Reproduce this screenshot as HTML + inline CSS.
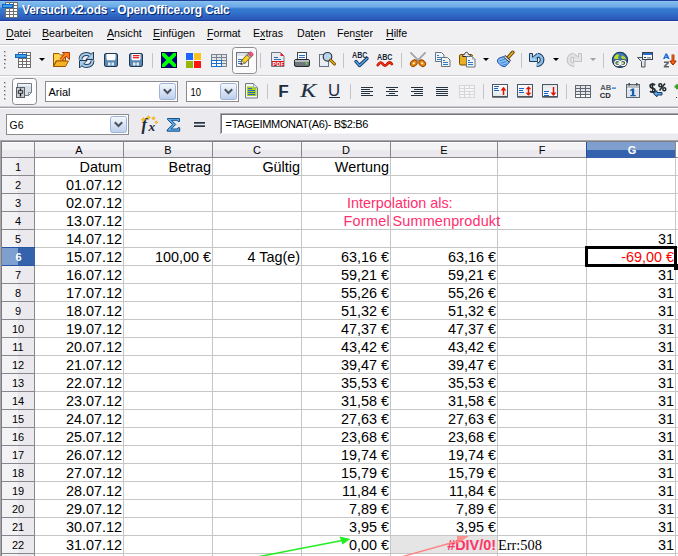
<!DOCTYPE html>
<html><head><meta charset="utf-8">
<style>
*{margin:0;padding:0;box-sizing:border-box}
html,body{width:678px;height:556px;overflow:hidden;background:#fff;font-family:"Liberation Sans",sans-serif}
.a{position:absolute}
#title{left:0;top:0;width:678px;height:22px;background:linear-gradient(#1E3C9C 0,#1E3C9C 1px,#96CAF4 1px,#7EBBEC 2px,#6CA9E6 7px,#4A8ADA 8px,#3479CF 9px,#3376CD 12px,#3068C4 15px,#2C56B6 20px,#1E3D9E 20px,#1E3D9E 21px,#F8F8FA 21px)}
#title .t{left:22px;top:3px;letter-spacing:-0.2px;font:bold 12px "Liberation Sans",sans-serif;color:#fff;text-shadow:1px 1px 0 #0A246A;white-space:pre}
#menu{left:0;top:22px;width:678px;height:22px;background:#F0EFF2}
#menu span{position:absolute;top:5px;font-size:10.6px;color:#000;white-space:pre;line-height:12px}
#menu u{text-decoration:none;border-bottom:1px solid #000}
.line{position:absolute;left:0;width:678px;height:1px}
#tb1{left:0;top:46px;width:678px;height:29px;background:#F1F1F3}
#tb2{left:0;top:77px;width:678px;height:29px;background:#F1F1F3}
#fbar{left:0;top:109px;width:678px;height:31px;background:#EBEAEE}
.grip{position:absolute;width:2px;height:2px;background:linear-gradient(135deg,#6A6A6E 50%,#C8C8CC 50%)}
.sep{position:absolute;width:1px;height:15px;background:#C4C4C8}
.ddarr{position:absolute;width:0;height:0;border-left:3px solid transparent;border-right:3px solid transparent;border-top:3px solid #000}
#grid{left:0;top:141px;width:678px;height:415px;background:#fff;overflow:hidden}
.vl{position:absolute;top:17px;width:1px;height:400px;background:#C6C6C6}
.hl{position:absolute;left:35px;width:643px;height:1px;background:#C6C6C6}
.rh{position:absolute;left:2px;width:32px;height:17px;background:linear-gradient(90deg,#F3F2F5 0,#F3F2F5 16px,#EBE9ED 16px);font:11px "Liberation Sans",sans-serif;color:#000;text-align:center;line-height:19px}
.rhs{position:absolute;left:2px;width:33px;height:19px;border-top:1px solid #2A55A5;border-bottom:1px solid #2A55A5;background:linear-gradient(90deg,#7F9FCF 0,#7F9FCF 16px,#3462AD 16px);font:bold 11px "Liberation Sans",sans-serif;color:#fff;text-align:center;line-height:19px}
.ch{position:absolute;top:1px;height:15px;background:linear-gradient(#FFFFFF 0,#FFFFFF 1px,#F3F2F5 1px,#F3F2F5 8px,#EBE9ED 8px);font:11px "Liberation Sans",sans-serif;color:#000;text-align:center;line-height:17px}
.chs{position:absolute;top:1px;height:16px;padding-left:2px;background:linear-gradient(#7F9FCF 0,#7F9FCF 8px,#3462AD 8px);font:bold 11px "Liberation Sans",sans-serif;color:#fff;text-align:center;line-height:17px}
.c{position:absolute;font-size:14.4px;color:#000;white-space:pre;line-height:18.5px}

</style></head><body>
<div id="title" class="a"><div class="t a">Versuch x2.ods - OpenOffice.org Calc</div><svg class="a" style="left:0;top:0" width="24" height="21" shape-rendering="crispEdges">
<rect x="5" y="2" width="13" height="16" fill="#6E6E6E"/>
<g fill="#fff">
<rect x="6" y="3" width="3" height="2"/><rect x="10" y="3" width="3" height="2"/><rect x="14" y="3" width="3" height="2"/>
<rect x="6" y="6" width="3" height="2"/><rect x="10" y="6" width="3" height="2"/><rect x="14" y="6" width="3" height="2"/>
<rect x="6" y="9" width="3" height="2"/><rect x="10" y="9" width="3" height="2"/><rect x="14" y="9" width="3" height="2"/>
<rect x="6" y="12" width="3" height="2"/><rect x="10" y="12" width="3" height="2"/><rect x="14" y="12" width="3" height="2"/>
<rect x="6" y="15" width="3" height="2"/><rect x="10" y="15" width="3" height="2"/><rect x="14" y="15" width="3" height="2"/>
</g>
<rect x="2" y="4" width="11" height="4" fill="#0B63C4"/>
<rect x="3" y="5" width="9" height="2" fill="#42A0E6"/>
</svg>
</div>
<div id="menu" class="a"><span style="left:6px"><u>D</u>atei</span><span style="left:42px"><u>B</u>earbeiten</span><span style="left:107px"><u>A</u>nsicht</span><span style="left:153px"><u>E</u>infügen</span><span style="left:207px"><u>F</u>ormat</span><span style="left:253px">E<u>x</u>tras</span><span style="left:297px">Da<u>t</u>en</span><span style="left:337px">Fen<u>s</u>ter</span><span style="left:386px"><u>H</u>ilfe</span></div>
<div class="line" style="top:44px;background:#CBCACE"></div>
<div class="line" style="top:45px;background:#FFFFFF"></div>
<div id="tb1" class="a"></div>
<div class="line" style="top:75px;background:#CBCACE"></div>
<div class="line" style="top:76px;background:#FFFFFF"></div>
<div id="tb2" class="a"></div>
<div class="line" style="top:106px;background:#CFCFD3"></div>
<div class="line" style="top:107px;background:#A2A2A6"></div>
<div class="line" style="top:108px;background:#FFFFFF"></div>
<div class="line" style="top:140px;background:#A6A6AA"></div>
<div id="fbar" class="a"></div>
<div class="grip" style="left:4px;top:51px"></div>
<div class="grip" style="left:4px;top:55px"></div>
<div class="grip" style="left:4px;top:59px"></div>
<div class="grip" style="left:4px;top:63px"></div>
<div class="grip" style="left:4px;top:67px"></div>
<div class="grip" style="left:4px;top:82px"></div>
<div class="grip" style="left:4px;top:86px"></div>
<div class="grip" style="left:4px;top:90px"></div>
<div class="grip" style="left:4px;top:94px"></div>
<div class="grip" style="left:4px;top:98px"></div>
<div class="sep" style="left:152px;top:53px"></div>
<div class="sep" style="left:260px;top:53px"></div>
<div class="sep" style="left:343px;top:53px"></div>
<div class="sep" style="left:401px;top:53px"></div>
<div class="sep" style="left:521px;top:53px"></div>
<div class="sep" style="left:603px;top:53px"></div>
<div class="sep" style="left:267px;top:84px"></div>
<div class="sep" style="left:350px;top:84px"></div>
<div class="sep" style="left:483px;top:84px"></div>
<div class="sep" style="left:566px;top:84px"></div>
<div class="ddarr" style="left:39px;top:58px;border-top-color:#000"></div>
<div class="ddarr" style="left:483px;top:58px;border-top-color:#000"></div>
<div class="ddarr" style="left:553px;top:58px;border-top-color:#000"></div>
<div class="ddarr" style="left:590px;top:58px;border-top-color:#A0A0A0"></div>
<svg class="a" style="left:0;top:0" width="678" height="141" viewBox="0 0 678 141" font-family="Liberation Sans">
<!-- ===== toolbar1 ===== -->
<!-- new (table) -->
<g shape-rendering="crispEdges">
<rect x="18" y="52" width="13" height="16" fill="#6E6E6E"/>
<g fill="#fff">
<rect x="19" y="53" width="3" height="2"/><rect x="23" y="53" width="3" height="2"/><rect x="27" y="53" width="3" height="2"/>
<rect x="19" y="56" width="3" height="2"/><rect x="23" y="56" width="3" height="2"/><rect x="27" y="56" width="3" height="2"/>
<rect x="19" y="59" width="3" height="2"/><rect x="23" y="59" width="3" height="2"/><rect x="27" y="59" width="3" height="2"/>
<rect x="19" y="62" width="3" height="2"/><rect x="23" y="62" width="3" height="2"/><rect x="27" y="62" width="3" height="2"/>
<rect x="19" y="65" width="3" height="2"/><rect x="23" y="65" width="3" height="2"/><rect x="27" y="65" width="3" height="2"/>
</g>
<rect x="15" y="54" width="12" height="4" fill="#0B63C4"/>
<rect x="16" y="55" width="10" height="2" fill="#42A0E6"/>
</g>
<!-- open folder -->
<path d="M53.5 53.5H59L60.5 55H65.5V61L56 61L53.5 66.5Z" fill="#FFD44C" stroke="#9A5400" stroke-linejoin="round"/>
<path d="M56.5 61H68.5L65.5 66.5H53.5Z" fill="#F4B422" stroke="#9A5400" stroke-linejoin="round"/>
<path d="M60.8 59.8L66.2 54.4" stroke="#B23C00" stroke-width="3.6"/>
<path d="M62.3 52.5H69.5V59.7Z" fill="#FF7A1C" stroke="#B23C00" stroke-linejoin="round"/>
<path d="M60.8 59.8L66.2 54.4" stroke="#FF8A2A" stroke-width="1.8"/>
<!-- reload -->
<g fill="none" stroke-linecap="butt">
<path d="M80.5 59.5C80.5 55.8 83.2 54 86.5 54C88.3 54 89.6 54.7 90.6 55.6" stroke="#1E3C5A" stroke-width="4"/>
<path d="M92.5 60.5C92.5 64.2 89.8 66 86.5 66C84.7 66 83.4 65.3 82.4 64.4" stroke="#1E3C5A" stroke-width="4"/>
</g>
<path d="M93.5 52v7.5h-7.5z" fill="#9CC4E8" stroke="#1E3C5A" stroke-linejoin="round"/>
<path d="M79.5 68v-7.5h7.5z" fill="#9CC4E8" stroke="#1E3C5A" stroke-linejoin="round"/>
<g fill="none">
<path d="M80.5 59.5C80.5 55.8 83.2 54 86.5 54C88.3 54 89.6 54.7 90.6 55.6" stroke="#A8CCEC" stroke-width="2"/>
<path d="M92.5 60.5C92.5 64.2 89.8 66 86.5 66C84.7 66 83.4 65.3 82.4 64.4" stroke="#A8CCEC" stroke-width="2"/>
</g>
<path d="M92.8 53.5v5.3h-5.3z" fill="#A8CCEC"/>
<path d="M80.2 66.5v-5.3h5.3z" fill="#A8CCEC"/>
<!-- save -->
<g>
<rect x="104.5" y="53.5" width="13" height="13" rx="1.5" fill="#5A88B2" stroke="#1C3A58"/>
<path d="M106.5 54h9v5l-.8 1.2h-7.4l-.8-1.2z" fill="#fff"/>
<rect x="108" y="62.5" width="2.5" height="3" fill="#E4EAF0"/><rect x="111.5" y="62.5" width="2.5" height="3" fill="#E4EAF0"/>
</g>
<g>
<rect x="129.5" y="53.5" width="13" height="13" rx="1.5" fill="#5A88B2" stroke="#1C3A58"/>
<path d="M131.5 54h9v5l-.8 1.2h-7.4l-.8-1.2z" fill="#fff"/>
<rect x="133" y="55" width="6.5" height="1.3" fill="#E82020"/><rect x="133" y="57" width="6" height="1.3" fill="#E82020"/>
<rect x="133" y="62.5" width="2.5" height="3" fill="#E4EAF0"/><rect x="136.5" y="62.5" width="2.5" height="3" fill="#E4EAF0"/>
</g>
<!-- green X -->
<rect x="161.5" y="52.5" width="15" height="15" fill="#000080" stroke="#00004A"/>
<clipPath id="xclip"><rect x="162" y="53" width="14" height="14"/></clipPath>
<path d="M162 53l14 14M176 53l-14 14" stroke="#00FF00" stroke-width="3.8" clip-path="url(#xclip)"/>
<!-- 4 squares -->
<g shape-rendering="crispEdges">
<rect x="186" y="53" width="7" height="7" fill="#1A66FF"/>
<rect x="194" y="53" width="7" height="7" fill="#FFC21E"/>
<rect x="186" y="61" width="7" height="7" fill="#98B404"/>
<rect x="194" y="61" width="7" height="7" fill="#FF1414"/>
</g>
<!-- table 2 -->
<g shape-rendering="crispEdges">
<rect x="211" y="54" width="16" height="13" fill="#7A848E"/>
<g fill="#E2E6EA">
<rect x="212" y="55" width="4" height="2"/><rect x="217" y="55" width="4" height="2"/><rect x="222" y="55" width="4" height="2"/>
<rect x="212" y="58" width="4" height="2"/><rect x="217" y="58" width="4" height="2"/><rect x="222" y="58" width="4" height="2"/>
<rect x="222" y="61" width="4" height="2"/><rect x="222" y="64" width="4" height="2"/>
</g>
<rect x="211" y="60" width="11" height="7" fill="#1A6ED0"/>
<g fill="#fff"><rect x="212" y="61" width="4" height="2"/><rect x="217" y="61" width="4" height="2"/><rect x="212" y="64" width="4" height="2"/><rect x="217" y="64" width="4" height="2"/></g>
</g>
<!-- edit button -->
<rect x="232.5" y="47.5" width="24" height="26" rx="3" fill="#FBFBFC" stroke="#8E8E90"/>
<rect x="236.5" y="52.5" width="12" height="14" fill="#DCE2E8" stroke="#6E7680"/>
<rect x="237" y="56" width="11" height="10" fill="#F4F6F8"/>
<g fill="#2A78C8" shape-rendering="crispEdges"><rect x="238" y="59" width="5" height="1"/><rect x="238" y="61" width="4" height="1"/><rect x="238" y="63" width="5" height="1"/></g>
<path d="M241.7 60.1L244.9 63.3L240.8 64.6Z" fill="#F4E8D0" stroke="#5A4A30" stroke-width=".7" stroke-linejoin="round"/>
<path d="M240.6 64.7l.6-1.9 1.3 1.3z" fill="#101010"/>
<path d="M241.7 60.1L247.1 54.7L250.3 57.9L244.9 63.3Z" fill="#F2C81C" stroke="#6A4A10" stroke-width=".8" stroke-linejoin="round"/>
<path d="M243.3 61.7L248.7 56.3" stroke="#FFE870" stroke-width=".8"/>
<path d="M247.1 54.7L248.2 53.6L251.4 56.8L250.3 57.9Z" fill="#D8DCE0" stroke="#404850" stroke-width=".7"/>
<path d="M248.2 53.6L249.6 52.2Q250.6 51.4 251.8 52.4L252.6 53.2Q253.6 54.4 252.8 55.4L251.4 56.8Z" fill="#EE5A7A" stroke="#A02848" stroke-width=".7"/>
<!-- pdf -->
<path d="M271.5 52.5h9l3.5 3.5v10.5h-12.5z" fill="#E8ECF0" stroke="#6E7884"/>
<path d="M280.5 52.5l3.5 3.5h-3.5z" fill="#E81C2C"/>
<g fill="#2A70B8" shape-rendering="crispEdges"><rect x="274" y="57" width="4" height="1"/><rect x="274" y="59" width="7" height="1"/></g>
<rect x="272" y="61" width="12" height="5" fill="#E0101E" shape-rendering="crispEdges"/>
<text x="272.6" y="65.6" font-size="5.2" font-weight="bold" fill="#fff" letter-spacing=".5">PDF</text>
<!-- print -->
<rect x="297.5" y="52.5" width="9" height="8" fill="#FAFAFA" stroke="#404850"/>
<g fill="#2A70C0" shape-rendering="crispEdges"><rect x="299" y="55" width="6" height="1"/><rect x="299" y="57" width="6" height="1"/></g>
<rect x="294.5" y="59.5" width="15" height="7" rx="1.5" fill="#70767C" stroke="#24282C"/>
<rect x="295" y="60" width="14" height="2" fill="#B8BCC0"/>
<rect x="305.5" y="62.5" width="2" height="2" fill="#60E040"/>
<!-- preview -->
<rect x="319.5" y="54.5" width="9" height="12" fill="#E8EEF4" stroke="#6A7480"/>
<circle cx="327.5" cy="56.8" r="4.3" fill="#B8D4EE" stroke="#303840" stroke-width="1.2"/>
<path d="M330.5 60l4 4" stroke="#5A4000" stroke-width="3" stroke-linecap="round"/>
<path d="M330.5 60l4 4" stroke="#E8B010" stroke-width="1.6" stroke-linecap="round"/>
<!-- spell -->
<text x="352" y="58.3" font-size="8.5" font-weight="bold" textLength="15.5" lengthAdjust="spacingAndGlyphs" fill="#182838">ABC</text>
<path d="M356 61.5l3.5 4 7.5-7" fill="none" stroke="#1A3458" stroke-width="3.4" stroke-linejoin="round" stroke-linecap="round"/>
<path d="M356 61.5l3.5 4 7.5-7" fill="none" stroke="#4AA6F0" stroke-width="1.6" stroke-linejoin="round" stroke-linecap="round"/>
<text x="377" y="60" font-size="8.5" font-weight="bold" textLength="15.5" lengthAdjust="spacingAndGlyphs" fill="#182838">ABC</text>
<path d="M377.8 65c2-3 3.5-3 5-1 1.5 2 3 2 4.5 0 1.5-2 3-2 4.5 0" fill="none" stroke="#B81000" stroke-width="2.8" stroke-linecap="round"/><path d="M377.8 65c2-3 3.5-3 5-1 1.5 2 3 2 4.5 0 1.5-2 3-2 4.5 0" fill="none" stroke="#FF3A10" stroke-width="1.2" stroke-linecap="round"/>
<!-- cut -->
<path d="M410.5 52.5l8.5 8.5M425.5 52.5l-8.5 8.5" stroke="#7E8288" stroke-width="1.5"/>
<path d="M411 53l7.5 7.5M425 53l-7.5 7.5" stroke="#D0D4D8" stroke-width=".5"/>
<g transform="rotate(-40 413.8 63.2)"><ellipse cx="413.8" cy="63.2" rx="3.6" ry="2.8" fill="#E88A10" stroke="#A04C00" stroke-width="1.1"/><ellipse cx="413.8" cy="63.2" rx="1.1" ry=".9" fill="#F4F4F6"/></g>
<g transform="rotate(40 422.2 63.2)"><ellipse cx="422.2" cy="63.2" rx="3.6" ry="2.8" fill="#E88A10" stroke="#A04C00" stroke-width="1.1"/><ellipse cx="422.2" cy="63.2" rx="1.1" ry=".9" fill="#F4F4F6"/></g>
<!-- copy -->
<path d="M435.5 52.5h6l2.5 2.5v6.5h-8.5z" fill="#F2F4F6" stroke="#6A7480"/>
<g fill="#2A78C8" shape-rendering="crispEdges"><rect x="437" y="55" width="2" height="1"/><rect x="437" y="57" width="5" height="1"/><rect x="437" y="59" width="5" height="1"/></g>
<path d="M441.5 57.5h6l2.5 2.5v6.5h-8.5z" fill="#F2F4F6" stroke="#6A7480"/>
<g fill="#2A78C8" shape-rendering="crispEdges"><rect x="443" y="60" width="2" height="1"/><rect x="443" y="62" width="5" height="1"/><rect x="443" y="64" width="5" height="1"/></g>
<!-- paste -->
<rect x="459.5" y="54.5" width="13" height="10.5" rx="1.5" fill="#E8B020" stroke="#7A4A00"/>
<path d="M462.5 56.5c0-1.5 1-2 2-2.2.3-1.2 1-2 2-2s1.7.8 2 2c1 .2 2 .7 2 2.2z" fill="#E8EAEC" stroke="#2A3038" stroke-width="1"/>
<path d="M466.5 56.5h6l2.5 2.5v8h-8.5z" fill="#F2F4F6" stroke="#6A7480"/>
<path d="M472.5 56.5v2.5h2.5" fill="#DDE2E6" stroke="#8A949E" stroke-width=".8"/>
<g fill="#2A78C8" shape-rendering="crispEdges"><rect x="468" y="60" width="2" height="1"/><rect x="468" y="62" width="5" height="1"/><rect x="468" y="64" width="5" height="1"/></g>
<!-- brush -->
<path d="M512.8 52.3L508.2 57.4" stroke="#5A3C00" stroke-width="3.6" stroke-linecap="round"/>
<path d="M512.8 52.3L508.2 57.4" stroke="#E2AC1C" stroke-width="1.8" stroke-linecap="round"/>
<path d="M503.3 56.6L509.3 62.3L505 66.8Q501 66.8 497.6 62.2Q497 59.8 498.6 58.4Z" fill="#84C2F2" stroke="#1A48B0" stroke-linejoin="round"/>
<path d="M499.5 60.8L504.8 59.3M500.8 63.2L506.3 61.6M502.5 65.3L507.3 63.8" stroke="#3A78D8" stroke-width=".9"/>
<path d="M504.3 55.9L510 61.4" stroke="#2A323A" stroke-width="2.8"/>
<path d="M504.6 56.5L509.6 61.2" stroke="#F2F4F6" stroke-width="1.1"/>
<!-- undo -->
<g><path d="M537.6 55A4.85 4.85 0 1 1 536.8 64.7" fill="none" stroke="#1A3A5C" stroke-width="4.7"/>
<path d="M533 59.2L538.2 55" stroke="#1A3A5C" stroke-width="4.6"/>
<path d="M529.5 53.5H532.5V58H537.5V61.5H529.5Z" fill="#A8D0F2" stroke="#1A3A5C" stroke-linejoin="round"/>
<path d="M537.6 55A4.85 4.85 0 1 1 536.8 64.7" fill="none" stroke="#8CC0EA" stroke-width="2.6"/>
<path d="M532.5 59L538.3 55" stroke="#8CC0EA" stroke-width="2.6"/>
<rect x="530" y="54" width="2" height="7" fill="#A8D0F2"/><rect x="530" y="58.5" width="7" height="2.5" fill="#A8D0F2"/>
</g>
<g transform="translate(1111,0) scale(-1,1)"><path d="M537.6 55A4.85 4.85 0 1 1 536.8 64.7" fill="none" stroke="#C2C2C4" stroke-width="4.7"/>
<path d="M533 59.2L538.2 55" stroke="#C2C2C4" stroke-width="4.6"/>
<path d="M529.5 53.5H532.5V58H537.5V61.5H529.5Z" fill="#E6E6E8" stroke="#C2C2C4" stroke-linejoin="round"/>
<path d="M537.6 55A4.85 4.85 0 1 1 536.8 64.7" fill="none" stroke="#E2E2E4" stroke-width="2.6"/>
<path d="M532.5 59L538.3 55" stroke="#E2E2E4" stroke-width="2.6"/>
<rect x="530" y="54" width="2" height="7" fill="#E6E6E8"/><rect x="530" y="58.5" width="7" height="2.5" fill="#E6E6E8"/>
</g>
<!-- globe -->
<circle cx="620" cy="59.9" r="7.6" fill="#3676BA" stroke="#1C3450" stroke-width="1.1"/>
<path d="M614 58.5c.2-2.5 1.8-4.2 4-4.5l1 1.5-1 2 1 1.5-2 .5z" fill="#C4DC20"/>
<path d="M621.5 55.2c2 .5 3.8 1.8 4.8 3.8l-2.5.5-1.5-.5-1.2-1.2z" fill="#B4D424"/>
<rect x="614.7" y="60.7" width="5.6" height="4.8" rx="2.4" fill="#6A9A40" stroke="#1C2A38" stroke-width="2.4"/>
<rect x="620.3" y="60.7" width="5.6" height="4.8" rx="2.4" fill="#6A9A40" stroke="#1C2A38" stroke-width="2.4"/>
<rect x="614.7" y="60.7" width="5.6" height="4.8" rx="2.4" fill="none" stroke="#FFFFFF" stroke-width="1.3"/>
<rect x="620.3" y="60.7" width="5.6" height="4.8" rx="2.4" fill="none" stroke="#FFFFFF" stroke-width="1.3"/>
<path d="M617.5 63.1h6" stroke="#FFFFFF" stroke-width="1.3"/>
<!-- filter -->
<path d="M637.5 57.5h10.5l-3 4v5.5h-3.5v-5.5z" fill="#E2E6EA" stroke="#4A525A"/>
<rect x="642.5" y="52.5" width="10" height="7" fill="#F8FAFC" stroke="#3A4450"/>
<rect x="643" y="53" width="9" height="2" fill="#2A6CC8"/>
<rect x="644" y="57" width="2" height="1" fill="#303840"/><rect x="647" y="57.5" width="4" height=".8" fill="#303840"/>
<!-- sort -->
<path d="M663 59l2.5-5.5h1.6l2.5 5.5h-1.9l-.4-1h-2.1l-.4 1zM665.3 56.8h1.3l-.65-1.6z" fill="#1A6CD8" fill-rule="evenodd"/>
<path d="M664 61.5h5v1.5l-3 3h3v1.5h-5.2v-1.5l3-3h-2.8z" fill="#5A626A"/>
<path d="M673 54.5v9.5" stroke="#9A2C00" stroke-width="2.8"/>
<path d="M669.8 61l3.2 4 3.2-4z" fill="#FF5A10" stroke="#9A2C00" stroke-linejoin="round"/>
<path d="M673 55v8" stroke="#FF6A18" stroke-width="1.2"/>
<!-- ===== toolbar2 ===== -->
<rect x="12.5" y="78.5" width="24" height="26" rx="3" fill="#FCFCFD" stroke="#8C8C8E"/>
<path d="M17.5 83.5h14v9l-3 3h-11z" fill="#D6DEE6" stroke="#727C86"/>
<rect x="18" y="84" width="13" height="2" fill="#EEF2F6"/>
<path d="M28.5 95.5v-3h3z" fill="#fff" stroke="#727C86" stroke-width=".8"/>
<rect x="16.5" y="87.5" width="8" height="10" fill="#D0D4D8" stroke="#5A6068"/>
<path d="M18 88v9M19.5 88v9M21.5 88v9M23 88v9" stroke="#B8BCC2" stroke-width=".6"/><path d="M20.5 88.5v8" stroke="#101418" stroke-width="1.3"/><rect x="18.3" y="90.8" width="4.4" height="2.4" fill="#E8EAEC" stroke="#1A1E24" stroke-width=".9"/>
<!-- font name box -->
<rect x="45.5" y="81.5" width="132" height="20" fill="#fff" stroke="#8C8C8E"/>
<text x="48.5" y="95.7" font-size="11" fill="#000">Arial</text>
<rect x="159.5" y="83.5" width="16" height="16" rx="2" fill="url(#btng)" stroke="#9CB2D8"/>
<path d="M163.8 89.3l3.7 3.7 3.7-3.7" fill="none" stroke="#4A505C" stroke-width="2"/>
<!-- size box -->
<rect x="186.5" y="81.5" width="52" height="20" fill="#fff" stroke="#8C8C8E"/>
<text x="190.5" y="95.7" font-size="11" textLength="10.5" lengthAdjust="spacingAndGlyphs" fill="#000">10</text>
<rect x="220.5" y="83.5" width="16" height="16" rx="2" fill="url(#btng)" stroke="#9CB2D8"/>
<path d="M224.8 89.3l3.7 3.7 3.7-3.7" fill="none" stroke="#4A505C" stroke-width="2"/>
<defs><linearGradient id="btng" x1="0" y1="0" x2="0" y2="1"><stop offset="0" stop-color="#F6F9FE"/><stop offset="1" stop-color="#BCCEEC"/></linearGradient></defs>
<!-- styles doc -->
<path d="M245.5 83.5h8l4 4v10.5h-12z" fill="#F0F4F8" stroke="#6E7882"/>
<path d="M253.5 83.5v4h4z" fill="#E0E6EC" stroke="#8E98A2" stroke-width=".8"/>
<path d="M247 86.5h6.5v1.5h3v8h-9.5z" fill="#A8D020"/>
<g fill="#2A64C0" shape-rendering="crispEdges"><rect x="248" y="88" width="4" height="1"/><rect x="248" y="90" width="7" height="1"/><rect x="248" y="92" width="7" height="1"/><rect x="248" y="94" width="7" height="1"/></g>
<!-- F K U -->
<text x="278.3" y="96.6" font-size="17.2" font-weight="bold" fill="#1C2E40">F</text>
<text x="300.3" y="96.6" font-size="18" font-style="italic" font-family="Liberation Serif" textLength="16" lengthAdjust="spacingAndGlyphs" fill="#1C2E40" stroke="#1C2E40" stroke-width=".15">K</text>
<text x="328" y="96.4" font-size="16.8" fill="#1C2E40">U</text>
<rect x="329" y="97" width="11" height="1" fill="#1C2E40"/>
<!-- align -->
<g fill="#26323E" shape-rendering="crispEdges">
<rect x="361" y="87" width="12" height="1"/><rect x="361" y="89" width="9" height="1"/><rect x="361" y="91" width="12" height="1"/><rect x="361" y="93" width="9" height="1"/><rect x="361" y="95" width="12" height="1"/>
<rect x="386" y="87" width="12" height="1"/><rect x="389" y="89" width="6" height="1"/><rect x="386" y="91" width="12" height="1"/><rect x="389" y="93" width="6" height="1"/><rect x="386" y="95" width="12" height="1"/>
<rect x="411" y="87" width="12" height="1"/><rect x="414" y="89" width="9" height="1"/><rect x="411" y="91" width="12" height="1"/><rect x="414" y="93" width="9" height="1"/><rect x="411" y="95" width="12" height="1"/>
<rect x="436" y="87" width="12" height="1"/><rect x="436" y="89" width="12" height="1"/><rect x="436" y="91" width="12" height="1"/><rect x="436" y="93" width="12" height="1"/><rect x="436" y="95" width="12" height="1"/>
</g>
<!-- merge (disabled) -->
<g shape-rendering="crispEdges">
<rect x="459" y="85" width="16" height="13" fill="#D4D6D8"/>
<g fill="#F6F6F8"><rect x="460" y="86" width="4" height="2"/><rect x="465" y="86" width="4" height="2"/><rect x="470" y="86" width="4" height="2"/>
<rect x="460" y="89" width="4" height="2"/><rect x="465" y="89" width="9" height="2"/>
<rect x="460" y="92" width="4" height="2"/><rect x="465" y="92" width="4" height="2"/><rect x="470" y="92" width="4" height="2"/>
<rect x="460" y="95" width="4" height="2"/><rect x="465" y="95" width="4" height="2"/><rect x="470" y="95" width="4" height="2"/></g>
</g>
<!-- valign boxes -->
<defs><linearGradient id="vg" x1="0" y1="0" x2="0" y2="1"><stop offset="0" stop-color="#FFFFFF"/><stop offset="1" stop-color="#E2E6EA"/></linearGradient>
<linearGradient id="vg2" x1="0" y1="0" x2="0" y2="1"><stop offset="0" stop-color="#E2E6EA"/><stop offset="1" stop-color="#FFFFFF"/></linearGradient></defs>
<rect x="492.5" y="84.5" width="15" height="12.5" fill="url(#vg)" stroke="#4C5660"/>
<rect x="493" y="96" width="14" height="1.5" fill="#4C5660"/>
<g fill="#1A64C8" shape-rendering="crispEdges"><rect x="494" y="86" width="5" height="1"/><rect x="494" y="88" width="4" height="1"/><rect x="494" y="90" width="5" height="1"/></g>
<path d="M503.5 95v-7.5" stroke="#E01400" stroke-width="1.5"/><path d="M500.5 90.5l3-3.5 3 3.5z" fill="#E01400"/>
<rect x="517.5" y="84.5" width="15" height="12.5" fill="url(#vg)" stroke="#4C5660"/>
<rect x="518" y="96" width="14" height="1.5" fill="#4C5660"/>
<g fill="#1A64C8" shape-rendering="crispEdges"><rect x="519" y="88" width="5" height="1"/><rect x="519" y="90" width="4" height="1"/><rect x="519" y="92" width="5" height="1"/></g>
<path d="M528.5 87v8" stroke="#E01400" stroke-width="1.5"/><path d="M525.7 89.2l2.8-3 2.8 3zM525.7 92.8l2.8 3 2.8-3z" fill="#E01400"/>
<rect x="542.5" y="84.5" width="15" height="12.5" fill="url(#vg2)" stroke="#4C5660"/>
<rect x="543" y="96" width="14" height="1.5" fill="#4C5660"/>
<g fill="#1A64C8" shape-rendering="crispEdges"><rect x="544" y="91" width="5" height="1"/><rect x="544" y="93" width="4" height="1"/><rect x="544" y="95" width="5" height="1"/></g>
<path d="M553.5 87v8" stroke="#E01400" stroke-width="1.5"/><path d="M550.5 92.5l3 3.5 3-3.5z" fill="#E01400"/>
<!-- grid -->
<g shape-rendering="crispEdges">
<rect x="575" y="85" width="16" height="13" fill="#606870"/>
<g fill="#E4E8EC"><rect x="576" y="86" width="4" height="2"/><rect x="581" y="86" width="4" height="2"/><rect x="586" y="86" width="4" height="2"/>
<rect x="576" y="89" width="4" height="2"/><rect x="581" y="89" width="4" height="2"/><rect x="586" y="89" width="4" height="2"/>
<rect x="576" y="92" width="4" height="2"/><rect x="581" y="92" width="4" height="2"/><rect x="586" y="92" width="4" height="2"/></g>
<g fill="#fff"><rect x="576" y="95" width="4" height="2"/><rect x="581" y="95" width="4" height="2"/><rect x="586" y="95" width="4" height="2"/></g>
</g>
<!-- AB-CD -->
<text x="600.2" y="89.6" font-size="7.6" font-weight="bold" fill="#545C64">AB</text>
<rect x="612" y="87.5" width="4" height="1.2" fill="#1A70D0"/>
<text x="599.8" y="97.9" font-size="7.6" font-weight="bold" fill="#1C242C">CD</text>
<!-- calendar -->
<rect x="626.5" y="84.5" width="13" height="13" fill="#F2F4F6" stroke="#5C646C"/>
<rect x="627" y="85" width="12" height="3" fill="#B8BEC4"/>
<rect x="628.5" y="83" width="1.5" height="2.5" fill="#404850"/><rect x="636" y="83" width="1.5" height="2.5" fill="#404850"/>
<rect x="627" y="89" width="12" height="8" fill="#DCE6F0"/>
<path d="M632 88.5h2.2v6.5h1.6v1.3h-5.5v-1.3h1.6v-4.6l-1.6.8v-1.3z" fill="#1A5CA8"/>
<!-- $% -->
<path d="M655 85.2c-.6-.6-1.5-.9-2.4-.9-1.4 0-2.4.8-2.4 1.9 0 2.6 4.8 1.5 4.8 4 0 1.1-1 1.9-2.5 1.9-1 0-1.9-.4-2.5-1" fill="none" stroke="#242C34" stroke-width="1.9"/>
<path d="M652.6 83v10" stroke="#242C34" stroke-width="1.2"/>
<circle cx="660.3" cy="85.3" r="1.5" fill="none" stroke="#242C34" stroke-width="1.5"/>
<circle cx="664.3" cy="89.2" r="1.5" fill="none" stroke="#242C34" stroke-width="1.5"/>
<path d="M665 83.5l-5.5 7" stroke="#242C34" stroke-width="1.6"/>
<path d="M653.5 93.7l3.5-3v1.8h5v2.5h-5v1.8z" fill="#5AA8EE" stroke="#1A3A66" stroke-linejoin="round"/>
<path d="M674.5 86.7h4M677 84.3v5" stroke="#3CA020" stroke-width="2.2"/>
<rect x="676" y="97" width="1" height="1" fill="#404040"/>

<!-- ===== formula bar ===== -->
<rect x="6.5" y="114.5" width="122" height="20" fill="#fff" stroke="#8C8C8E"/>
<text x="9.6" y="128.8" font-size="10.4" fill="#000">G6</text>
<rect x="110.5" y="116.5" width="16" height="16" rx="2" fill="url(#btng)" stroke="#9CB2D8"/>
<path d="M114.8 122.3l3.7 3.7 3.7-3.7" fill="none" stroke="#4A505C" stroke-width="2"/>
<!-- fx -->
<text x="141.5" y="129.5" font-size="16.5" font-style="italic" font-weight="bold" font-family="Liberation Serif" fill="#1E2A38">f</text>
<text x="148.4" y="131.4" font-size="13.5" font-style="italic" font-weight="bold" font-family="Liberation Serif" fill="#1E2A38">x</text>
<g fill="#FFD000" stroke="#E89000" stroke-width=".5"><path d="M143.5 117.5l.7 1.5 1.5.7-1.5.7-.7 1.5-.7-1.5-1.5-.7 1.5-.7z"/><path d="M148.5 115.5l.6 1.3 1.3.6-1.3.6-.6 1.3-.6-1.3-1.3-.6 1.3-.6z"/><path d="M153.5 116.5l.6 1.2 1.2.6-1.2.6-.6 1.2-.6-1.2-1.2-.6 1.2-.6z"/><path d="M156.3 120.8l.5 1 1 .5-1 .5-.5 1-.5-1-1-.5 1-.5z"/></g>
<!-- sigma -->
<path d="M167.5 118.5h12v3h-1.5l-.8-1.2h-5.7l4.2 4.2-4.5 4.5h6.2l.8-1.3h1.5v3.5h-12.5v-1.3l5.3-5.4-5-5z" fill="#58AEEC" stroke="#1A4E86" stroke-linejoin="round"/>
<!-- equals -->
<rect x="194" y="122" width="11" height="1.7" fill="#2A3644"/><rect x="194" y="125.3" width="11" height="1.7" fill="#2A3644"/>
<!-- formula input -->
<rect x="220" y="113" width="470" height="21" fill="#fff"/>
<rect x="220" y="113" width="470" height="1" fill="#A6A6AA"/><rect x="220" y="113" width="1" height="21" fill="#A6A6AA"/>
<rect x="221" y="114" width="470" height="1" fill="#747478"/><rect x="221" y="114" width="1" height="19" fill="#747478"/>
<rect x="221" y="133" width="470" height="1" fill="#F6F6F8"/>
<text x="225.6" y="127.8" font-size="11" letter-spacing="-0.33" fill="#000">=TAGEIMMONAT(A6)- B$2:B6</text>
</svg>

<div id="grid" class="a"><div class="a" style="left:0;top:0;width:678px;height:1px;background:#7E7E82"></div><div class="a" style="left:0;top:0;width:1px;height:415px;background:#A6A6AA"></div><div class="a" style="left:1px;top:0;width:1px;height:415px;background:#7E7E82"></div><div class="a" style="left:0;top:16px;width:678px;height:1px;background:#88888C"></div><div class="a" style="left:34px;top:0;width:1px;height:415px;background:#88888C"></div><div class="ch" style="left:2px;width:32px"></div><div class="ch" style="left:35px;width:88px">A</div><div class="a" style="left:123px;top:0;width:1px;height:17px;background:#88888C"></div><div class="vl" style="left:123px"></div><div class="ch" style="left:124px;width:88px">B</div><div class="a" style="left:212px;top:0;width:1px;height:17px;background:#88888C"></div><div class="vl" style="left:212px"></div><div class="ch" style="left:213px;width:88px">C</div><div class="a" style="left:301px;top:0;width:1px;height:17px;background:#88888C"></div><div class="vl" style="left:301px"></div><div class="ch" style="left:302px;width:88px">D</div><div class="a" style="left:390px;top:0;width:1px;height:17px;background:#88888C"></div><div class="vl" style="left:390px"></div><div class="ch" style="left:391px;width:106px">E</div><div class="a" style="left:497px;top:0;width:1px;height:17px;background:#88888C"></div><div class="vl" style="left:497px"></div><div class="ch" style="left:498px;width:88px">F</div><div class="a" style="left:586px;top:0;width:1px;height:17px;background:#88888C"></div><div class="vl" style="left:586px"></div><div class="chs" style="left:587px;width:88px">G</div><div class="a" style="left:675px;top:0;width:1px;height:17px;background:#88888C"></div><div class="vl" style="left:675px"></div><div class="a" style="left:586px;top:1px;width:1px;height:16px;background:#2550A0"></div><div class="rh" style="top:17px">1</div><div class="a" style="left:2px;top:34px;width:32px;height:1px;background:#88888C"></div><div class="hl" style="top:34px"></div><div class="rh" style="top:35px">2</div><div class="a" style="left:2px;top:52px;width:32px;height:1px;background:#88888C"></div><div class="hl" style="top:52px"></div><div class="rh" style="top:53px">3</div><div class="a" style="left:2px;top:70px;width:32px;height:1px;background:#88888C"></div><div class="hl" style="top:70px"></div><div class="rh" style="top:71px">4</div><div class="a" style="left:2px;top:88px;width:32px;height:1px;background:#88888C"></div><div class="hl" style="top:88px"></div><div class="rh" style="top:89px">5</div><div class="a" style="left:2px;top:106px;width:32px;height:1px;background:#2A55A5"></div><div class="hl" style="top:106px"></div><div class="rhs" style="top:106px">6</div><div class="a" style="left:2px;top:124px;width:32px;height:1px;background:#2A55A5"></div><div class="hl" style="top:124px"></div><div class="rh" style="top:125px">7</div><div class="a" style="left:2px;top:142px;width:32px;height:1px;background:#88888C"></div><div class="hl" style="top:142px"></div><div class="rh" style="top:143px">8</div><div class="a" style="left:2px;top:160px;width:32px;height:1px;background:#88888C"></div><div class="hl" style="top:160px"></div><div class="rh" style="top:161px">9</div><div class="a" style="left:2px;top:178px;width:32px;height:1px;background:#88888C"></div><div class="hl" style="top:178px"></div><div class="rh" style="top:179px">10</div><div class="a" style="left:2px;top:196px;width:32px;height:1px;background:#88888C"></div><div class="hl" style="top:196px"></div><div class="rh" style="top:197px">11</div><div class="a" style="left:2px;top:214px;width:32px;height:1px;background:#88888C"></div><div class="hl" style="top:214px"></div><div class="rh" style="top:215px">12</div><div class="a" style="left:2px;top:232px;width:32px;height:1px;background:#88888C"></div><div class="hl" style="top:232px"></div><div class="rh" style="top:233px">13</div><div class="a" style="left:2px;top:250px;width:32px;height:1px;background:#88888C"></div><div class="hl" style="top:250px"></div><div class="rh" style="top:251px">14</div><div class="a" style="left:2px;top:268px;width:32px;height:1px;background:#88888C"></div><div class="hl" style="top:268px"></div><div class="rh" style="top:269px">15</div><div class="a" style="left:2px;top:286px;width:32px;height:1px;background:#88888C"></div><div class="hl" style="top:286px"></div><div class="rh" style="top:287px">16</div><div class="a" style="left:2px;top:304px;width:32px;height:1px;background:#88888C"></div><div class="hl" style="top:304px"></div><div class="rh" style="top:305px">17</div><div class="a" style="left:2px;top:322px;width:32px;height:1px;background:#88888C"></div><div class="hl" style="top:322px"></div><div class="rh" style="top:323px">18</div><div class="a" style="left:2px;top:340px;width:32px;height:1px;background:#88888C"></div><div class="hl" style="top:340px"></div><div class="rh" style="top:341px">19</div><div class="a" style="left:2px;top:358px;width:32px;height:1px;background:#88888C"></div><div class="hl" style="top:358px"></div><div class="rh" style="top:359px">20</div><div class="a" style="left:2px;top:376px;width:32px;height:1px;background:#88888C"></div><div class="hl" style="top:376px"></div><div class="rh" style="top:377px">21</div><div class="a" style="left:2px;top:394px;width:32px;height:1px;background:#88888C"></div><div class="hl" style="top:394px"></div><div class="rh" style="top:395px">22</div><div class="a" style="left:2px;top:412px;width:32px;height:1px;background:#88888C"></div><div class="hl" style="top:412px"></div><div class="rh" style="top:413px">23</div><div class="a" style="left:2px;top:430px;width:32px;height:1px;background:#88888C"></div><div class="hl" style="top:430px"></div><div class="c" style="right:556px;top:17px;">Datum</div><div class="c" style="right:467px;top:17px;">Betrag</div><div class="c" style="right:378px;top:17px;">Gültig</div><div class="c" style="right:289px;top:17px;">Wertung</div><div class="c" style="right:556px;top:35px;">01.07.12</div><div class="c" style="right:556px;top:53px;">02.07.12</div><div class="c" style="right:556px;top:71px;">13.07.12</div><div class="c" style="right:556px;top:89px;">14.07.12</div><div class="c" style="right:556px;top:107px;">15.07.12</div><div class="c" style="right:556px;top:125px;">16.07.12</div><div class="c" style="right:556px;top:143px;">17.07.12</div><div class="c" style="right:556px;top:161px;">18.07.12</div><div class="c" style="right:556px;top:179px;">19.07.12</div><div class="c" style="right:556px;top:197px;">20.07.12</div><div class="c" style="right:556px;top:215px;">21.07.12</div><div class="c" style="right:556px;top:233px;">22.07.12</div><div class="c" style="right:556px;top:251px;">23.07.12</div><div class="c" style="right:556px;top:269px;">24.07.12</div><div class="c" style="right:556px;top:287px;">25.07.12</div><div class="c" style="right:556px;top:305px;">26.07.12</div><div class="c" style="right:556px;top:323px;">27.07.12</div><div class="c" style="right:556px;top:341px;">28.07.12</div><div class="c" style="right:556px;top:359px;">29.07.12</div><div class="c" style="right:556px;top:377px;">30.07.12</div><div class="c" style="right:556px;top:395px;">31.07.12</div><div class="c" style="right:289px;top:107px;">63,16 €</div><div class="c" style="right:182px;top:107px;">63,16 €</div><div class="c" style="right:289px;top:125px;">59,21 €</div><div class="c" style="right:182px;top:125px;">59,21 €</div><div class="c" style="right:289px;top:143px;">55,26 €</div><div class="c" style="right:182px;top:143px;">55,26 €</div><div class="c" style="right:289px;top:161px;">51,32 €</div><div class="c" style="right:182px;top:161px;">51,32 €</div><div class="c" style="right:289px;top:179px;">47,37 €</div><div class="c" style="right:182px;top:179px;">47,37 €</div><div class="c" style="right:289px;top:197px;">43,42 €</div><div class="c" style="right:182px;top:197px;">43,42 €</div><div class="c" style="right:289px;top:215px;">39,47 €</div><div class="c" style="right:182px;top:215px;">39,47 €</div><div class="c" style="right:289px;top:233px;">35,53 €</div><div class="c" style="right:182px;top:233px;">35,53 €</div><div class="c" style="right:289px;top:251px;">31,58 €</div><div class="c" style="right:182px;top:251px;">31,58 €</div><div class="c" style="right:289px;top:269px;">27,63 €</div><div class="c" style="right:182px;top:269px;">27,63 €</div><div class="c" style="right:289px;top:287px;">23,68 €</div><div class="c" style="right:182px;top:287px;">23,68 €</div><div class="c" style="right:289px;top:305px;">19,74 €</div><div class="c" style="right:182px;top:305px;">19,74 €</div><div class="c" style="right:289px;top:323px;">15,79 €</div><div class="c" style="right:182px;top:323px;">15,79 €</div><div class="c" style="right:289px;top:341px;">11,84 €</div><div class="c" style="right:182px;top:341px;">11,84 €</div><div class="c" style="right:289px;top:359px;">7,89 €</div><div class="c" style="right:182px;top:359px;">7,89 €</div><div class="c" style="right:289px;top:377px;">3,95 €</div><div class="c" style="right:182px;top:377px;">3,95 €</div><div class="c" style="right:289px;top:395px;">0,00 €</div><div class="c" style="right:4px;top:125px;">31</div><div class="c" style="right:4px;top:143px;">31</div><div class="c" style="right:4px;top:161px;">31</div><div class="c" style="right:4px;top:179px;">31</div><div class="c" style="right:4px;top:197px;">31</div><div class="c" style="right:4px;top:215px;">31</div><div class="c" style="right:4px;top:233px;">31</div><div class="c" style="right:4px;top:251px;">31</div><div class="c" style="right:4px;top:269px;">31</div><div class="c" style="right:4px;top:287px;">31</div><div class="c" style="right:4px;top:305px;">31</div><div class="c" style="right:4px;top:323px;">31</div><div class="c" style="right:4px;top:341px;">31</div><div class="c" style="right:4px;top:359px;">31</div><div class="c" style="right:4px;top:377px;">31</div><div class="c" style="right:4px;top:395px;">31</div><div class="c" style="right:4px;top:89px;">31</div><div class="c" style="right:467px;top:107px;">100,00 €</div><div class="c" style="right:378px;top:107px;">4 Tag(e)</div><div class="c" style="right:4px;top:107px;color:#FF0000">-69,00 €</div><div class="c" style="left:347px;top:53px;color:#FF2E6E">Interpolation als:</div><div class="c" style="right:288px;top:71px;color:#FF2E6E;letter-spacing:0.3px">Formel</div><div class="c" style="left:392.5px;top:71px;color:#FF2E6E;letter-spacing:0.18px">Summenprodukt</div><div class="a" style="left:391px;top:395px;width:106px;height:17px;background:#E5E5E5"></div><div class="c" style="right:182px;top:395px;font-weight:bold;color:#FF3366">#DIV/0!</div><div class="c" style="left:498px;top:395px;font-family:'Liberation Serif',serif">Err:508</div><div class="a" style="left:585px;top:105px;width:92px;height:21px;border:3px solid #000"></div><div class="a" style="left:674px;top:123px;width:4px;height:6px;background:#000"></div><svg class="a" style="left:0;top:0" width="678" height="415" viewBox="0 141 678 415">
<path d="M257 557L342 540.5" stroke="#22EE22" stroke-width="1.5"/>
<path d="M350.5 539L339.5 536.5 342.5 544.5z" fill="#22EE22"/>
<path d="M401 557L458 541" stroke="#FF8282" stroke-width="1.3"/>
<path d="M457 536L469 536 457 544z" fill="#FF8282" fill-opacity=".85"/>
</svg>
</div>
</body></html>
